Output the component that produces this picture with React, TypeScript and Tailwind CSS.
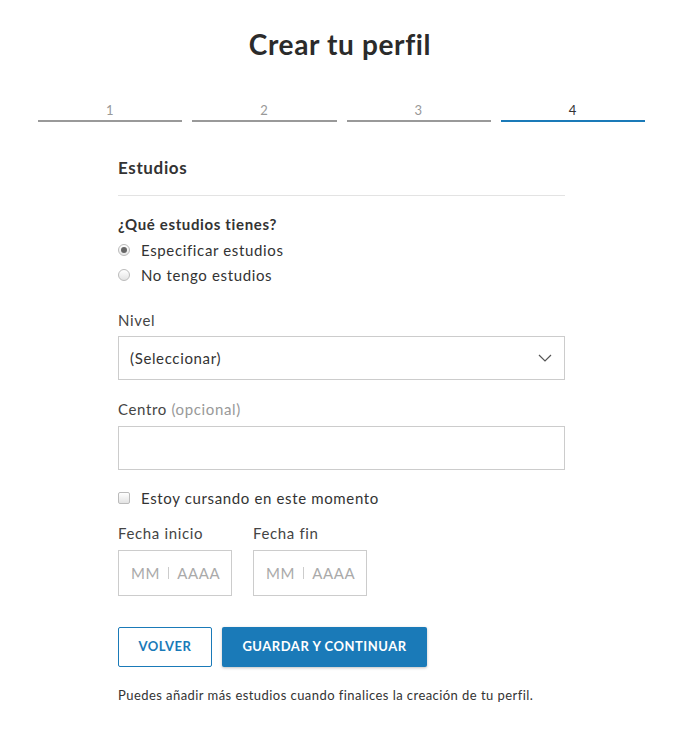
export default function App() {
  const steps = [1, 2, 3, 4]

  return (
    <div className="min-h-screen bg-white text-[#333] tracking-[0.04em] font-['Lato','Open_Sans',sans-serif]">
      <h1 className="pt-[27px] text-center text-[28px] font-bold leading-[34px] text-[#2b2b2b]">Crear tu perfil</h1>

      <div className="ml-[38px] mr-[35px] mt-[41px] flex gap-[10px]">
        {steps.map(s => (
          <div key={s} className="flex-1">
            <div className={`text-center text-[13px] leading-[16px] ${s === 4 ? 'text-[#333]' : 'text-[#999]'}`}>{s}</div>
            <div className={`mt-[2px] h-[2px] ${s === 4 ? 'bg-[#1a7ab8]' : 'bg-[#999]'}`} />
          </div>
        ))}
      </div>

      <div className="mt-[35px] ml-[118px] w-[447px]">
        <h2 className="text-[17px] font-bold leading-[22px] text-[#333]">Estudios</h2>
        <div className="mt-[16px] h-px bg-[#e3e3e3]" />

        <p className="mt-[18px] text-[15px] font-bold leading-[20px]">¿Qué estudios tienes?</p>
        <div className="mt-[6px] flex items-center gap-[11px] text-[15px] leading-[20px]">
          <span className="flex h-[12px] w-[12px] items-center justify-center rounded-full border border-[#bbb] bg-gradient-to-b from-[#fff] to-[#e6e6e6]">
            <span className="h-[6px] w-[6px] rounded-full bg-[#666]" />
          </span>
          Especificar estudios
        </div>
        <div className="mt-[5px] flex items-center gap-[11px] text-[15px] leading-[20px]">
          <span className="h-[12px] w-[12px] rounded-full border border-[#bbb] bg-gradient-to-b from-[#fff] to-[#e3e3e3]" />
          No tengo estudios
        </div>

        <label className="mt-[25px] block text-[15px] leading-[20px] text-[#444]">Nivel</label>
        <div className="mt-[6px] flex h-[44px] items-center justify-between border border-[#ccc] pl-[11px] pr-[12px] text-[15px]">
          <span>(Seleccionar)</span>
          <svg width="14" height="8" viewBox="0 0 14 8" fill="none" stroke="#555" strokeWidth="1.2">
            <path d="M1 1l6 6 6-6" />
          </svg>
        </div>

        <label className="mt-[19px] block text-[15px] leading-[20px] text-[#444]">
          Centro <span className="text-[#999]">(opcional)</span>
        </label>
        <div className="mt-[7px] h-[44px] border border-[#ccc]" />

        <div className="mt-[18px] flex items-center gap-[11px] text-[15px] leading-[20px]">
          <span className="h-[12px] w-[12px] rounded-[2px] border border-[#bbb] bg-gradient-to-b from-[#fff] to-[#e3e3e3]" />
          Estoy cursando en este momento
        </div>

        <div className="mt-[15px] flex gap-[21px]">
          {['Fecha inicio', 'Fecha fin'].map(label => (
            <div key={label}>
              <div className="text-[15px] leading-[20px] text-[#444]">{label}</div>
              <div className="mt-[7px] flex h-[46px] w-[114px] items-center border border-[#ccc] pl-[12px] text-[15px] text-[#aaa]">
                MM
                <span className="mx-[8px] h-[12px] w-px bg-[#ccc]" />
                AAAA
              </div>
            </div>
          ))}
        </div>

        <div className="mt-[31px] flex gap-[10px]">
          <button className="h-[40px] w-[94px] rounded-[2px] border border-[#1a7ab8] text-[13px] font-bold tracking-[0.04em] text-[#1a7ab8]">VOLVER</button>
          <button className="h-[40px] w-[205px] rounded-[2px] bg-[#1a7ab8] text-[13px] font-bold tracking-[0.04em] text-white shadow-[0_1px_3px_rgba(0,0,0,0.25)]">GUARDAR Y CONTINUAR</button>
        </div>

        <p className="mt-[20px] text-[13px] leading-[16px] tracking-[0.034em] text-[#333]">Puedes añadir más estudios cuando finalices la creación de tu perfil.</p>
      </div>
    </div>
  )
}
